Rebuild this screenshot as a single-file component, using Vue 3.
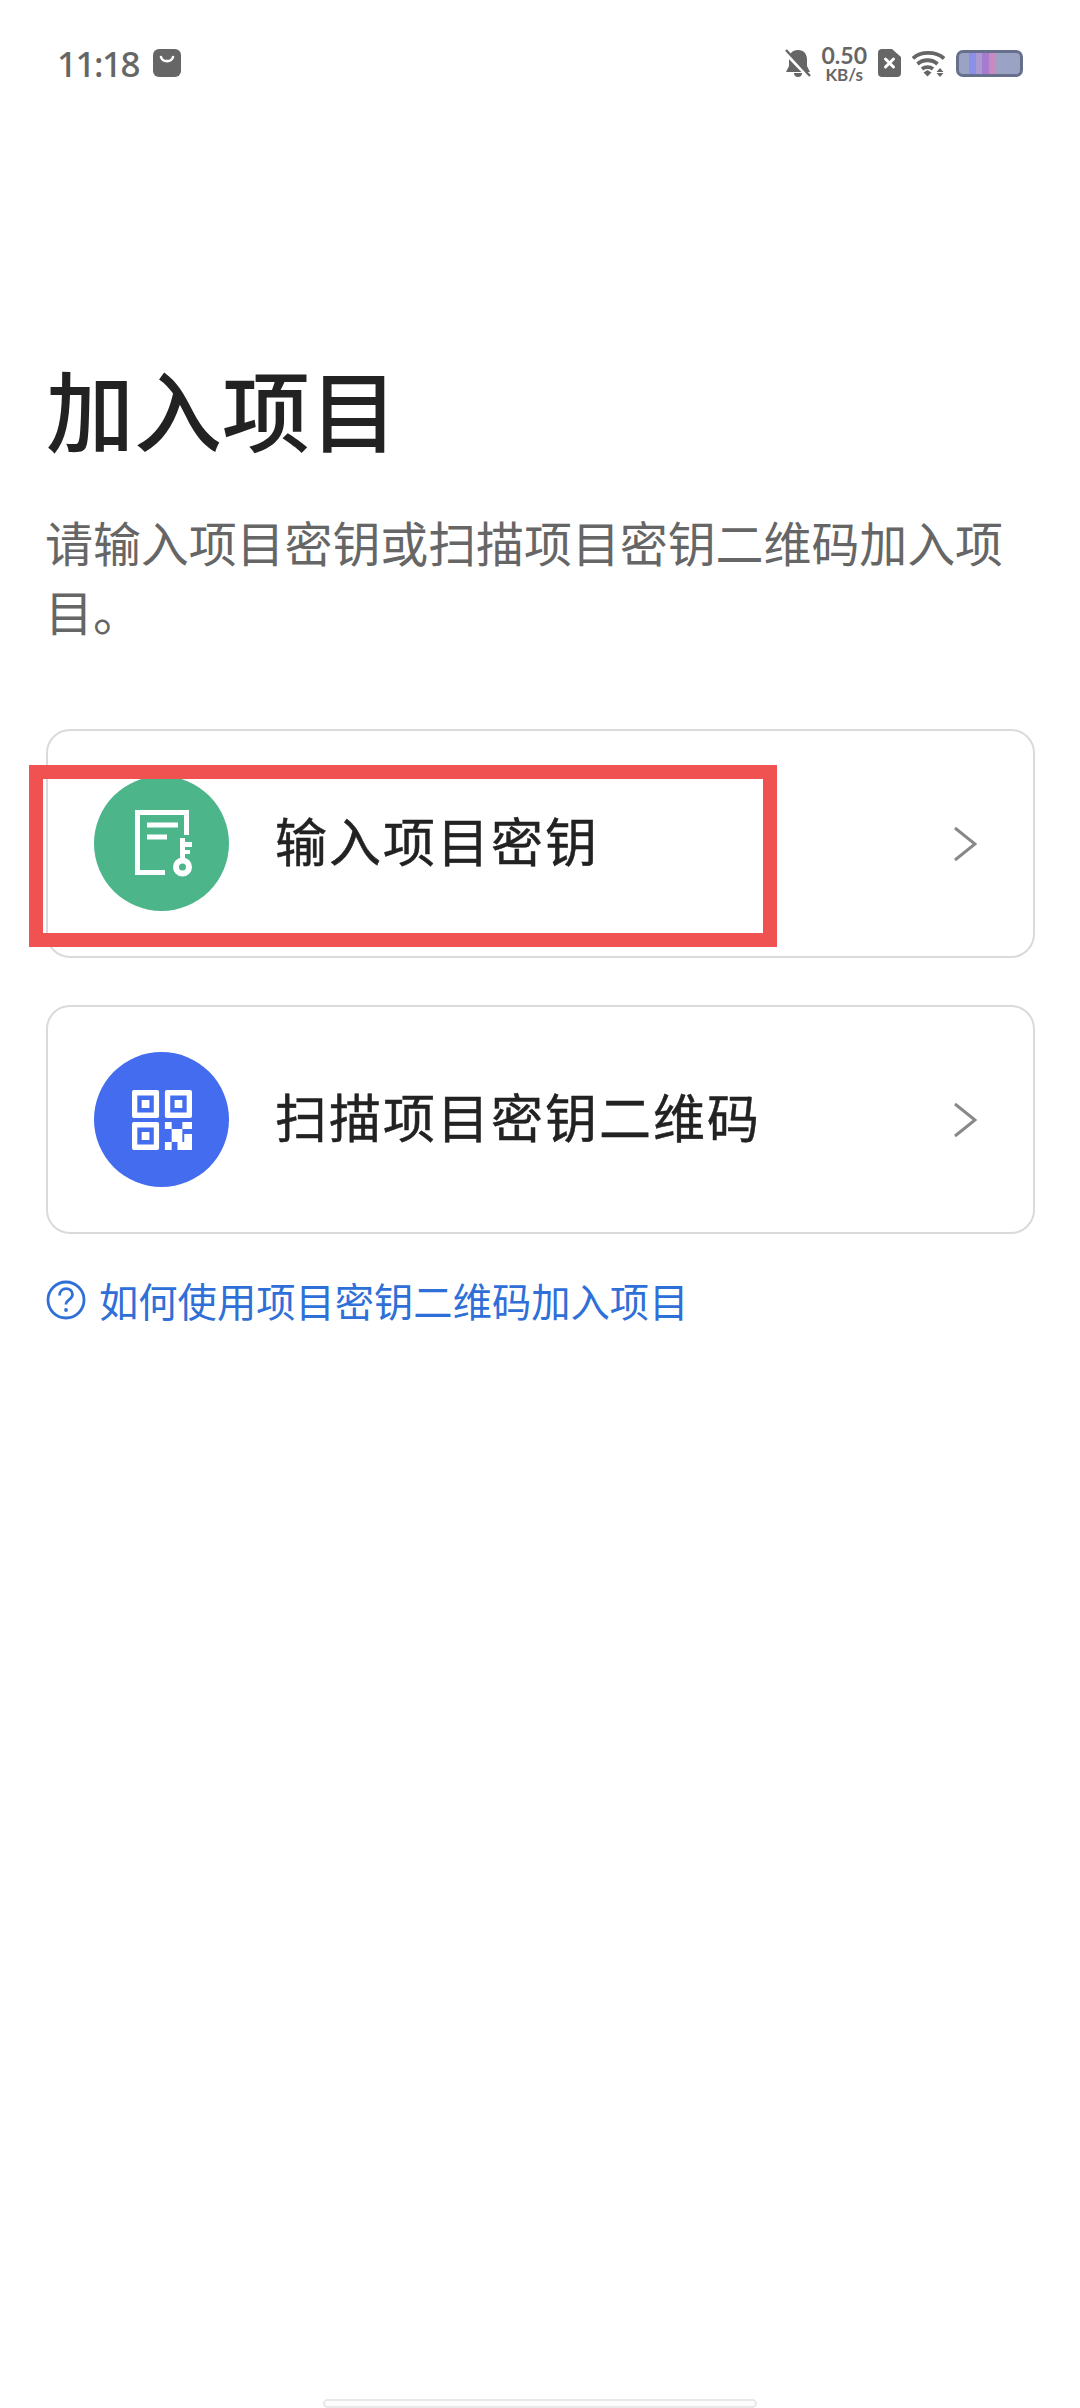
<template>
  <div class="page">
    <!-- status bar -->
    <div class="status-bar">
      <div class="status-left">
        <span class="time">11:18</span>
        <svg class="bag" width="28" height="28" viewBox="0 0 28 28">
          <rect width="28" height="28" rx="6" fill="#666" />
          <path d="M8 8 C9.500 13.500 18.500 13.500 20 8" fill="none" stroke="#fff" stroke-width="2.600" stroke-linecap="round" />
        </svg>
      </div>
      <div class="status-right">
        <svg width="26" height="28" viewBox="0 0 26 28">
          <path d="M13 1c6 0 9 4 9 10v6l3 6H1l3-6v-6C4 5 7 1 13 1z" fill="#666" />
          <path d="M9 24h8c0 2.500-1.500 4-4 4s-4-1.500-4-4z" fill="#666" />
          <path d="M0 3l24 25" stroke="#fff" stroke-width="4" />
          <path d="M1 1l24 26" stroke="#666" stroke-width="2.400" />
        </svg>
        <div class="speed">
          <span class="speed-num">0.50</span>
          <span class="speed-unit">KB/s</span>
        </div>
        <svg width="23" height="28" viewBox="0 0 23 28">
          <path d="M4 0h10l9 8v16a4 4 0 0 1-4 4H4a4 4 0 0 1-4-4V4a4 4 0 0 1 4-4z" fill="#666" />
          <path d="M7.500 10l8 8M15.500 10l-8 8" stroke="#fff" stroke-width="3" stroke-linecap="round" />
        </svg>
        <svg width="33" height="27" viewBox="0 0 33 27">
          <g fill="none" stroke="#666" stroke-width="3.800">
            <path d="M1 8.500C8 1 24 1 32 8.500" />
            <path d="M5.500 14C11 9 20 9 25.500 14" />
            <path d="M10 19c3-2.500 8-2.500 11 0" />
          </g>
          <path d="M11.500 22.500l4-2.500 4 2.500-4 4z" fill="#666" />
          <path d="M28 18l3.500 4h-7zM28 27l3.500-4h-7z" fill="#666" />
        </svg>
        <div class="battery">
          <span class="battery-glow"></span>
        </div>
      </div>
    </div>

    <main class="content">
      <h1 class="title">加入项目</h1>
      <p class="desc">请输入项目密钥或扫描项目密钥二维码加入项目。</p>

      <div class="card">
        <div class="circle green">
          <svg width="70" height="70" viewBox="0 0 70 70">
            <path d="M59.500 26V3.500H10.500V63.500H38" fill="none" stroke="#fff" stroke-width="5" />
            <path d="M20 16h31M20 28h20" stroke="#fff" stroke-width="5" fill="none" />
            <path d="M53 29h5v22h-5zM58 33h7v5h-7zM58 41h5v4h-5z" fill="#fff" />
            <circle cx="55.500" cy="58" r="6.500" fill="none" stroke="#fff" stroke-width="6" />
          </svg>
        </div>
        <span class="label">输入项目密钥</span>
        <svg class="arrow" width="24" height="36" viewBox="0 0 24 36">
          <path d="M2 2l20 16L2 34" fill="none" stroke="#888" stroke-width="3" />
        </svg>
      </div>

      <div class="card">
        <div class="circle blue">
          <svg width="60" height="60" viewBox="0 0 62 60" preserveAspectRatio="none" fill="#fff">
            <path fill-rule="evenodd" d="M2 0h24a2 2 0 0 1 2 2v24a2 2 0 0 1-2 2H2a2 2 0 0 1-2-2V2a2 2 0 0 1 2-2zm3.500 5.500v17h17v-17z" />
            <rect x="10" y="10" width="8" height="8" />
            <path fill-rule="evenodd" d="M36 0h24a2 2 0 0 1 2 2v24a2 2 0 0 1-2 2H36a2 2 0 0 1-2-2V2a2 2 0 0 1 2-2zm3.500 5.500v17h17v-17z" />
            <rect x="44" y="10" width="8" height="8" />
            <path fill-rule="evenodd" d="M2 32h24a2 2 0 0 1 2 2v24a2 2 0 0 1-2 2H2a2 2 0 0 1-2-2V34a2 2 0 0 1 2-2zm3.500 5.500v17h17v-17z" />
            <rect x="10" y="42" width="8" height="8" />
            <path d="M34 32h7v7h-7zM52 32h10v7H52zM41 39h11v13H41zM34 52h7v8h-7zM54 44h8v16H47v-8h7z" />
          </svg>
        </div>
        <span class="label">扫描项目密钥二维码</span>
        <svg class="arrow" width="24" height="36" viewBox="0 0 24 36">
          <path d="M2 2l20 16L2 34" fill="none" stroke="#888" stroke-width="3" />
        </svg>
      </div>

      <div class="help">
        <svg width="40" height="40" viewBox="0 0 40 40">
          <circle cx="20" cy="20" r="18" fill="none" stroke="#2f6fd8" stroke-width="2.800" />
          <path d="M13.500 15.500c0-9 13-9 13-1 0 5-6.500 5-6.500 10" fill="none" stroke="#2f6fd8" stroke-width="2.800" />
          <circle cx="20" cy="30" r="1.900" fill="#2f6fd8" />
        </svg>
        <span>如何使用项目密钥二维码加入项目</span>
      </div>
    </main>

    <div class="home-bar"></div>

    <!-- annotation drawn over the screenshot -->
    <div class="highlight"></div>
  </div>
</template>

<script setup>
</script>

<style>
html,
body {
  margin: 0;
  background: #fff;
}
</style>

<style scoped>
.page {
  position: relative;
  width: 1080px;
  height: 2408px;
  overflow: hidden;
  background: #fff;
  font-family: "Noto Sans CJK SC", "Noto Sans", sans-serif;
}

.status-bar {
  display: flex;
  align-items: center;
  justify-content: space-between;
  height: 28px;
  padding: 49px 57px 0 57px;
}

.status-left {
  display: flex;
  align-items: center;
  gap: 14px;
}

.time {
  font-family: "Noto Sans", sans-serif;
  font-size: 35px;
  font-weight: 500;
  letter-spacing: -1.500px;
  color: #666;
}

.status-right {
  display: flex;
  align-items: center;
  gap: 11px;
}

.speed {
  display: flex;
  flex-direction: column;
  align-items: center;
  font-family: "Lato", sans-serif;
  font-weight: 700;
  color: #666;
}

.speed-num {
  font-size: 23px;
  line-height: 22px;
}

.speed-unit {
  font-size: 17px;
  line-height: 17px;
}

.battery {
  width: 67px;
  height: 27px;
  box-sizing: border-box;
  border: 3px solid #666f8c;
  border-radius: 7px;
  background: #9aa3c4;
  overflow: hidden;
}

.battery-glow {
  display: block;
  width: 28px;
  height: 100%;
  margin-left: 10px;
  background: linear-gradient(90deg, #8b8fe8 0 25%, #a99ad0 25% 45%, #a67cd0 45% 70%, #c98ac0 70% 90%, #9aa3c4);
}

.content {
  padding: 0 45px 0 46px;
}

.title {
  margin: 265px 0 0;
  font-size: 88px;
  line-height: 130px;
  font-weight: 500;
  color: #222;
}

.desc {
  margin: 35px 0 0 -1px;
  font-size: 48px;
  line-height: 69px;
  letter-spacing: -0.100px;
  color: #666;
}

.card {
  display: flex;
  align-items: center;
  height: 229px;
  box-sizing: border-box;
  margin-top: 84px;
  padding: 0 56px 0 46px;
  border: 2.500px solid #dadada;
  border-radius: 24px;
  background: #fff;
}

.card + .card {
  margin-top: 47px;
}

.circle {
  display: flex;
  align-items: center;
  justify-content: center;
  flex-shrink: 0;
  width: 135px;
  height: 135px;
  border-radius: 50%;
}

.green {
  background: #4cb58a;
}

.blue {
  background: #436cee;
}

.label {
  flex: 1;
  margin: -8px 0 0 46px;
  font-size: 52px;
  letter-spacing: 2px;
  -webkit-text-stroke: 0.500px #222;
  color: #222;
}

.help {
  display: flex;
  align-items: center;
  gap: 13px;
  margin-top: 42px;
  font-size: 39.300px;
  line-height: 48px;
  color: #2f6fd8;
}

.home-bar {
  position: absolute;
  left: 323px;
  bottom: 0;
  width: 434px;
  height: 9px;
  box-sizing: border-box;
  border: 2px solid #e8e8e8;
  border-radius: 5px;
  background: #fdfdfd;
}

.highlight {
  position: absolute;
  left: 29px;
  top: 765px;
  width: 748px;
  height: 182px;
  box-sizing: border-box;
  border: 14px solid #f05252;
}
</style>
